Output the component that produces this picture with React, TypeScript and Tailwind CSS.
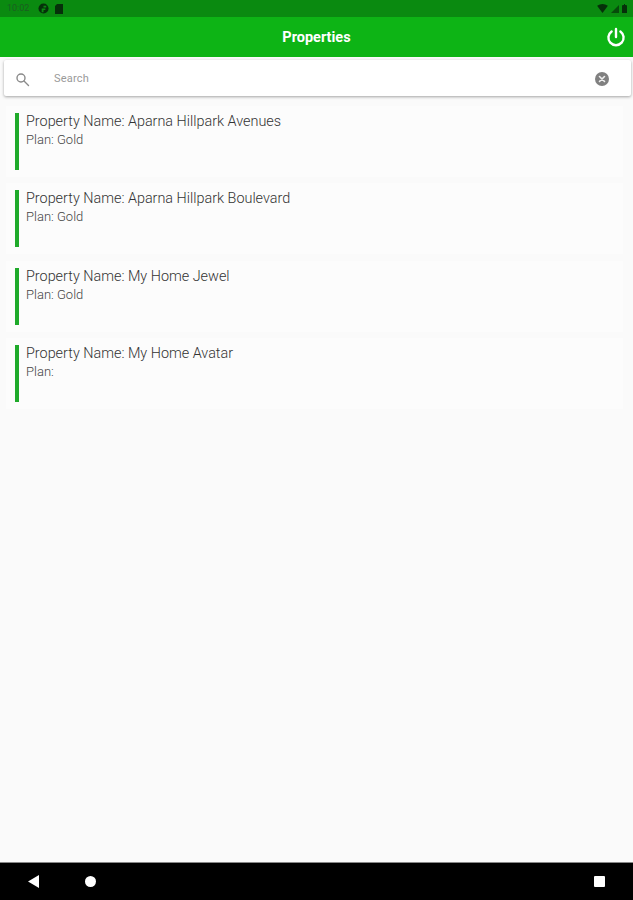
const properties = [
  { name: 'Aparna Hillpark Avenues', plan: 'Gold' },
  { name: 'Aparna Hillpark Boulevard', plan: 'Gold' },
  { name: 'My Home Jewel', plan: 'Gold' },
  { name: 'My Home Avatar', plan: '' },
];

export default function App() {
  return (
    <div className="flex h-[900px] w-[633px] flex-col overflow-hidden bg-[#fafafa] font-['Roboto',sans-serif]">
      {/* Status bar */}
      <div className="flex h-[17px] shrink-0 items-center justify-between bg-[#0a8a10] pl-[7px] pr-[6px]">
        <div className="flex items-center gap-[6px]">
          <span className="text-[9px] leading-none text-[#1b5e20]">10:02</span>
          <svg className="ml-[3px]" width="11" height="11" viewBox="0 0 12 12">
            <circle cx="6" cy="6" r="5.5" fill="#06300a" />
            <path d="M6 3h3v2H6zM4 6h4v1.5H6V10H4z" fill="#0a8a10" />
          </svg>
          <svg width="8" height="10" viewBox="0 0 8 10">
            <path d="M2 0h6v10H0V2z" fill="#06300a" />
          </svg>
        </div>
        <div className="flex items-center gap-[3px]">
          <svg width="11" height="9" viewBox="0 0 12 10">
            <path d="M0 2q6-4 12 0L6 10z" fill="#06300a" />
          </svg>
          <svg width="8" height="8" viewBox="0 0 8 8">
            <path d="M8 0v8H0z" fill="#06300a" fillOpacity="0.7" />
          </svg>
          <svg width="5" height="9" viewBox="0 0 5 9">
            <path d="M1 1h1V0h1v1h1a1 1 0 0 1 1 1v7H0V2a1 1 0 0 1 1-1z" fill="#06300a" />
          </svg>
        </div>
      </div>

      {/* App bar */}
      <div className="relative flex h-[40px] shrink-0 items-center justify-center bg-[#0db415] pt-[1px]">
        <span className="text-[14.5px] font-bold text-white">Properties</span>
        <svg
          className="absolute right-[7px] top-[10px]"
          width="20"
          height="20"
          viewBox="0 0 20 20"
          fill="none"
          stroke="white"
          strokeWidth="2.4"
          strokeLinecap="round"
        >
          <path d="M10 2v8" />
          <path d="M5.6 4.4a7.6 7.6 0 1 0 8.8 0" />
        </svg>
      </div>

      {/* Search */}
      <div className="ml-[4px] mr-[2px] mt-[3px] flex h-[36px] shrink-0 items-center rounded-[2px] bg-white pl-[11px] pr-[22px] pt-[2px] shadow-[0_1px_3px_rgba(0,0,0,0.35)]">
        <svg width="15" height="15" viewBox="0 0 15 15" fill="none" stroke="#8a8a8a" strokeWidth="1.4" strokeLinecap="round">
          <circle cx="6" cy="6" r="4" />
          <path d="M9 9l4.5 4.5" />
        </svg>
        <span className="ml-[24px] text-[11px] tracking-[0.2px] text-[#9a9a9a]">Search</span>
        <svg className="ml-auto" width="14" height="14" viewBox="0 0 14 14">
          <circle cx="7" cy="7" r="7" fill="#808080" />
          <path d="M4.5 4.5l5 5M9.5 4.5l-5 5" stroke="#eeeeee" strokeWidth="1.6" strokeLinecap="round" />
        </svg>
      </div>

      {/* Property list */}
      <div className="mt-[10px] flex flex-col gap-[6.33px] pl-[6px] pr-[10px]">
        {properties.map((property) => (
          <div key={property.name} className="flex h-[71px] items-center bg-[#fcfcfc] pl-[9px]">
            <div className="h-[57px] w-[4px] shrink-0 bg-[#1faa2a]" />
            <div className="ml-[7px] flex h-[57px] flex-col">
              <span className="text-[14.4px] font-light leading-[17px] text-[#333333]">Property Name: {property.name}</span>
              <span className="mt-[1px] text-[13px] font-light leading-[18px] text-[#444444]">Plan: {property.plan}</span>
            </div>
          </div>
        ))}
      </div>

      {/* Nav bar */}
      <div className="mt-auto flex h-[38px] shrink-0 items-center border-t border-[#888888] bg-black pl-[28px] pr-[28px]">
        <svg width="11" height="13" viewBox="0 0 11 13">
          <path d="M11 0v13L0 6.5z" fill="white" />
        </svg>
        <div className="ml-[46px] h-[11px] w-[11px] rounded-full bg-white" />
        <div className="ml-auto h-[11px] w-[11px] rounded-[1px] bg-white" />
      </div>
    </div>
  );
}
